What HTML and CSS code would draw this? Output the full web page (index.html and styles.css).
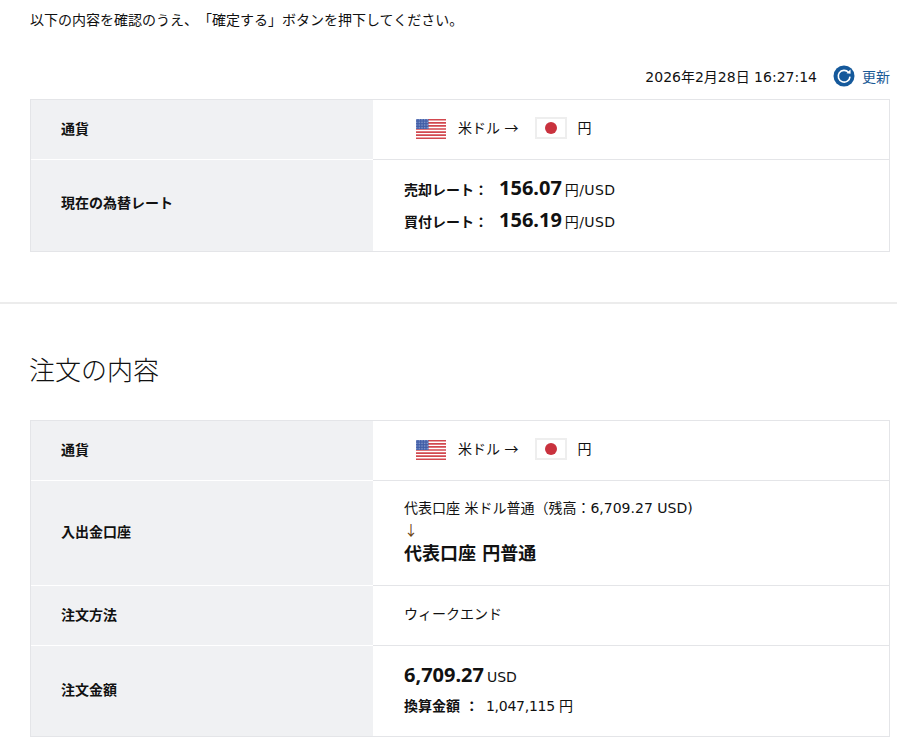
FILE: index.html
```html
<!DOCTYPE html>
<html lang="ja">
<head>
<meta charset="utf-8">
<title>注文の内容</title>
<link rel="stylesheet" href="styles.css">
</head>
<body>
<section class="top">
  <p class="intro">以下の内容を確認のうえ、「確定する」ボタンを押下してください。</p>
  <div class="stamp">
    <span>2026年2月28日 16:27:14</span>
    <a class="refresh">
      <svg class="refresh-icon" viewBox="0 0 22 22" width="22" height="22"><circle cx="11" cy="11" r="10.5" fill="#15599b"/><path d="M15.6 7.4A5.9 5.9 0 1 0 17 11.6" fill="none" stroke="#fff" stroke-width="1.6"/><path d="M13.5 8.2l4.1.6-.1-4.2z" fill="#fff"/></svg>
      <span>更新</span>
    </a>
  </div>
  <div class="table">
    <div class="row head-row">
      <div class="th">通貨</div>
      <div class="td currency">
        <svg class="flag" viewBox="0 0 30 20" width="30" height="20"><defs><pattern id="stars1" width="1.6" height="1.6" patternUnits="userSpaceOnUse"><rect width="1.6" height="1.6" fill="#3f5ca6"/><rect width=".8" height=".8" fill="#8fa3d2"/></pattern></defs><rect width="30" height="20" fill="#fff"/><path d="M0 .8h30M0 3.9h30M0 6.9h30M0 10h30M0 13.1h30M0 16.1h30M0 19.2h30" stroke="#d2484f" stroke-width="1.6"/><rect width="12.5" height="10" fill="url(#stars1)"/></svg>
        <span class="cur-text">米ドル <span class="arrow">→</span></span>
        <span class="jp-flag"><i class="sun"></i></span>
        <span class="cur-text">円</span>
      </div>
    </div>
    <div class="row rate-row">
      <div class="th">現在の為替レート</div>
      <div class="td rates">
        <div class="rate"><b class="rl">売却レート：</b><b class="rv">156.07</b><span class="unit">円/USD</span></div>
        <div class="rate"><b class="rl">買付レート：</b><b class="rv">156.19</b><span class="unit">円/USD</span></div>
      </div>
    </div>
  </div>
</section>
<hr class="sep">
<section class="order">
  <h2 class="title">注文の内容</h2>
  <div class="table">
    <div class="row head-row">
      <div class="th">通貨</div>
      <div class="td currency">
        <svg class="flag" viewBox="0 0 30 20" width="30" height="20"><defs><pattern id="stars2" width="1.6" height="1.6" patternUnits="userSpaceOnUse"><rect width="1.6" height="1.6" fill="#3f5ca6"/><rect width=".8" height=".8" fill="#8fa3d2"/></pattern></defs><rect width="30" height="20" fill="#fff"/><path d="M0 .8h30M0 3.9h30M0 6.9h30M0 10h30M0 13.1h30M0 16.1h30M0 19.2h30" stroke="#d2484f" stroke-width="1.6"/><rect width="12.5" height="10" fill="url(#stars2)"/></svg>
        <span class="cur-text">米ドル <span class="arrow">→</span></span>
        <span class="jp-flag"><i class="sun"></i></span>
        <span class="cur-text">円</span>
      </div>
    </div>
    <div class="row acct-row">
      <div class="th">入出金口座</div>
      <div class="td acct">
        <div>代表口座 米ドル普通（残高：6,709.27 USD)</div>
        <div class="down">↓</div>
        <b class="to">代表口座 円普通</b>
      </div>
    </div>
    <div class="row method-row">
      <div class="th">注文方法</div>
      <div class="td method">ウィークエンド</div>
    </div>
    <div class="row amt-row">
      <div class="th">注文金額</div>
      <div class="td amt">
        <div class="amt-line"><b class="rv">6,709.27</b><span class="unit">USD</span></div>
        <div class="conv"><b class="rl">換算金額 ：</b><span class="conv-value">1,047,115 円</span></div>
      </div>
    </div>
  </div>
</section>
</body>
</html>
```
FILE: styles.css
```css
* { box-sizing: border-box; }
html, body { margin: 0; padding: 0; }
body {
  font-family: "DejaVu Sans", "Noto Sans CJK JP", sans-serif;
  font-size: 14px;
  color: #111;
  background: #fff;
  overflow: hidden;
  height: 740px;
  text-spacing-trim: space-all;
}
.top { padding: 0 7px 50px 30px; }
.intro {
  margin: 0;
  padding-top: 10px;
  height: 65px;
  font-size: 14px;
  line-height: 20px;
}
.stamp {
  display: flex;
  justify-content: flex-end;
  align-items: center;
  gap: 16px;
  height: 22px;
  margin-bottom: 12px;
}
.refresh { display: flex; align-items: center; gap: 7px; color: #1a5a96; }
.refresh-icon { display: block; }
.table { border: 1px solid #e4e5e8; }
.row { display: flex; }
.head-row { height: 59px; }
.rate-row { height: 92px; }
.acct-row { height: 105px; }
.method-row { height: 60px; }
.amt-row { height: 91px; }
.th {
  width: 342px;
  flex: none;
  display: flex;
  align-items: center;
  padding: 0 0 4px 30px;
  background: #f0f1f3;
  font-weight: 700;
  border-top: 1px solid #fff;
}
.rate-row .th { padding-bottom: 7px; }
.td {
  flex: 1;
  display: flex;
  align-items: center;
  padding: 0 0 2px 31px;
  border-top: 1px solid #e4e5e8;
}
.head-row .th, .head-row .td { border-top: 0; }
.currency { padding-left: 43px; gap: 12px; }
.flag { display: block; flex: none; }
.cur-text { padding-bottom: 4px; }
.arrow { font-family: "Noto Sans CJK JP", sans-serif; }
.jp-flag {
  width: 32px;
  height: 22px;
  margin: 0 -2px 2px 5px;
  border: 2px solid #eee;
  display: flex;
  align-items: center;
  justify-content: center;
}
.sun { width: 12px; height: 12px; border-radius: 50%; background: #c9323e; }
.rates, .amt, .acct { flex-direction: column; align-items: flex-start; justify-content: center; }
.rates { padding-bottom: 4px; }
.rate { display: flex; align-items: baseline; height: 32px; line-height: 32px; }
.rate .unit { letter-spacing: .4px; }
.rl { font-weight: 700; }
.rv { font-family: "Noto Sans", sans-serif; font-size: 20px; font-weight: 700; margin-left: 11px; margin-right: 3px; }
.amt-line { line-height: 30px; }
.amt { padding-bottom: 6px; }
.amt .rv { margin-left: 0; }
.method { padding-bottom: 6px; }
.sep { margin: 0; border: 0; height: 2px; background: #ececec; }
.order { padding: 0 7px 0 30px; }
.title {
  margin: 0 0 0 -1px;
  height: 116px;
  padding-top: 45px;
  font-family: "Noto Sans CJK JP", sans-serif;
  font-size: 26px;
  line-height: 40px;
  font-weight: 300;
}
.acct { line-height: 20px; padding-top: 2px; }
.down { color: #6a4210; font-family: "Noto Sans CJK JP", sans-serif; margin-top: 1px; }
.to { font-size: 18px; line-height: 30px; }
.conv { margin-top: 4px; display: flex; gap: 7px; line-height: 20px; }
.conv-value { letter-spacing: -.25px; }
```
